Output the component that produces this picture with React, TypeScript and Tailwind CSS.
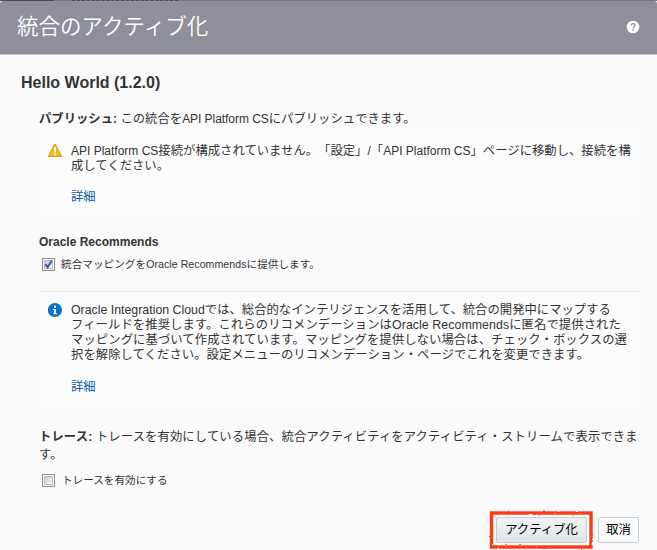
import React from 'react';

function Ja({ children }: { children: React.ReactNode }) {
  return <span className="text-[12.35px]">{children}</span>;
}

function WarningIcon() {
  return (
    <svg width="16" height="16" viewBox="0 0 16 16" className="shrink-0">
      <path d="M7.4 1.4 H8.3 L14.4 13.4 H1.4 Z" fill="#f9bd08" stroke="#dba21a" strokeWidth="1.2" strokeLinejoin="round" />
      <rect x="7" y="4.2" width="2" height="5.2" fill="#fff" />
      <rect x="7" y="10.4" width="2" height="2" fill="#fff" />
    </svg>
  );
}

function InfoIcon() {
  return (
    <svg width="16" height="16" viewBox="0 0 16 16" className="shrink-0">
      <circle cx="7.9" cy="8" r="7.1" fill="#0572ce" />
      <rect x="7" y="3.7" width="2" height="2" fill="#fff" />
      <path d="M6 6.9 H9 V11.2 H10 V12.2 H6 V11.2 H7 V7.9 H6 Z" fill="#fff" />
    </svg>
  );
}

function HelpIcon() {
  return (
    <svg width="14" height="14" viewBox="0 0 14 14">
      <circle cx="7" cy="7" r="6.3" fill="#fff" />
      <path d="M5.2 5.6 C5.2 3 8.9 3.1 8.9 5.3 C8.9 6.6 7.1 6.7 7.1 8.4" fill="none" stroke="#8e8f9b" strokeWidth="1.3" />
      <rect x="6.4" y="9.4" width="1.4" height="1.4" fill="#8e8f9b" />
    </svg>
  );
}

function Checkbox({ checked = false }: { checked?: boolean }) {
  return (
    <span className="flex h-[13px] w-[13px] shrink-0 items-center justify-center border border-[#8e8f8f] bg-[#f6f6f6]">
      <span className="flex h-[9px] w-[9px] border border-[#b8bcc2] bg-linear-to-br from-[#cbcfd5] to-[#f6f6f6]">
        {checked && (
          <svg width="9" height="9" viewBox="0 0 9 9" className="-m-px shrink-0 overflow-visible">
            <path d="M1.4 4.2 L3.6 7.2 L7.7 0.8" fill="none" stroke="#3d55a0" strokeWidth="2" />
          </svg>
        )}
      </span>
    </span>
  );
}

function HandDrawnFrame() {
  return (
    <svg width="108" height="42" viewBox="0 0 108 42" className="pointer-events-none absolute -top-[3px] -left-[4px]">
      <defs>
        <filter id="rough" x="-5%" y="-10%" width="110%" height="120%">
          <feTurbulence type="fractalNoise" baseFrequency="0.27" numOctaves="2" seed="4" result="n" />
          <feDisplacementMap in="SourceGraphic" in2="n" scale="2.1" xChannelSelector="R" yChannelSelector="G" />
        </filter>
      </defs>
      <rect x="4.5" y="4" width="99.5" height="34" fill="none" stroke="#fa3a14" strokeWidth="3.4" filter="url(#rough)" />
    </svg>
  );
}

export default function App() {
  return (
    <div className="flex h-[550px] w-[657px] flex-col overflow-hidden bg-[#fafafa] font-['Liberation_Sans','Noto_Sans_CJK_JP',sans-serif] text-[12px] leading-[15px] whitespace-nowrap text-[#333] [text-spacing-trim:space-all]">
      <div className="flex h-px shrink-0 bg-[#7b7573]">
        <span className="w-[54px] bg-[#4a4746]" />
        <span className="ml-[18px] w-[106px] border-t border-dashed border-[#4f4b4a]" />
      </div>
      <header className="flex h-[54px] shrink-0 items-center justify-between rounded-t-[3px] border-b border-[#b9c7d3] bg-[#8e8f9b] pr-[17px] pb-[1px] pl-[17px]">
        <h1 className="text-[21.5px] font-[350] text-white">統合のアクティブ化</h1>
        <HelpIcon />
      </header>

      <main className="flex flex-col pr-[18px] pl-[39px]">
        <h2 className="mt-[18px] -ml-[18px] text-[16px] leading-[20px] font-bold">Hello World (1.2.0)</h2>

        <p className="mt-[19px]">
          <b><Ja>パブリッシュ</Ja>:</b> <Ja>この統合を</Ja><span className="tracking-[-0.05px]">API Platform CS</span><Ja>にパブリッシュできます。</Ja>
        </p>

        <section className="mt-[7px] flex h-[83px] bg-[#fbfbfb] pt-[9px] pl-[8px]">
          <WarningIcon />
          <div className="pt-px pl-[8px]">
            <p>API Platform CS<Ja>接続が構成されていません。「設定」</Ja>/<Ja>「</Ja>API Platform CS<Ja>」ページに移動し、接続を構</Ja></p>
            <p><Ja>成してください。</Ja></p>
            <p className="mt-[16px] text-[#0b5fa5]"><Ja>詳細</Ja></p>
          </div>
        </section>

        <h3 className="mt-[18px] font-bold">Oracle Recommends</h3>
        <label className="mt-[7px] flex items-center gap-[6px] pl-[3px] text-[10.6px] tracking-[0.05px]">
          <Checkbox checked />
          <span>統合マッピングをOracle Recommendsに提供します。</span>
        </label>

        <section className="mt-[19px] flex h-[111px] border-t border-[#dfe4e4] bg-[#fbfbfb] pt-[10px] pl-[8px]">
          <InfoIcon />
          <div className="pt-px pl-[8px] text-[12.35px]">
            <p>Oracle Integration Cloudでは、総合的なインテリジェンスを活用して、統合の開発中にマップする</p>
            <p className="tracking-[0.07px]">フィールドを推奨します。これらのリコメンデーションはOracle Recommendsに匿名で提供された</p>
            <p className="tracking-[0.07px]">マッピングに基づいて作成されています。マッピングを提供しない場合は、チェック・ボックスの選</p>
            <p className="tracking-[0.05px]">択を解除してください。設定メニューのリコメンデーション・ページでこれを変更できます。</p>
            <p className="mt-[17px] text-[#0b5fa5]">詳細</p>
          </div>
        </section>

        <p className="mt-[26px] text-[12.3px] leading-[18px] tracking-[0.14px]">
          <b>トレース:</b> トレースを有効にしている場合、統合アクティビティをアクティビティ・ストリームで表示できま<br />す。
        </p>
        <label className="mt-[9px] flex items-center gap-[7px] pl-[3px] text-[10.6px]">
          <Checkbox />
          <span>トレースを有効にする</span>
        </label>
      </main>

      <footer className="mt-[24px] flex items-center justify-end gap-[6px] pr-[18px] text-[12.35px] text-black">
        <div className="relative p-[5px]">
          <button className="block h-[26px] w-[91px] rounded-[2px] border border-[#c0cbd5] bg-linear-to-b from-[#f1f3f3] to-[#dfe4e7]">アクティブ化</button>
          <HandDrawnFrame />
        </div>
        <button className="h-[26px] w-[41px] rounded-[2px] border border-[#c4ced7] bg-[#fbfbfb]">取消</button>
      </footer>
    </div>
  );
}
